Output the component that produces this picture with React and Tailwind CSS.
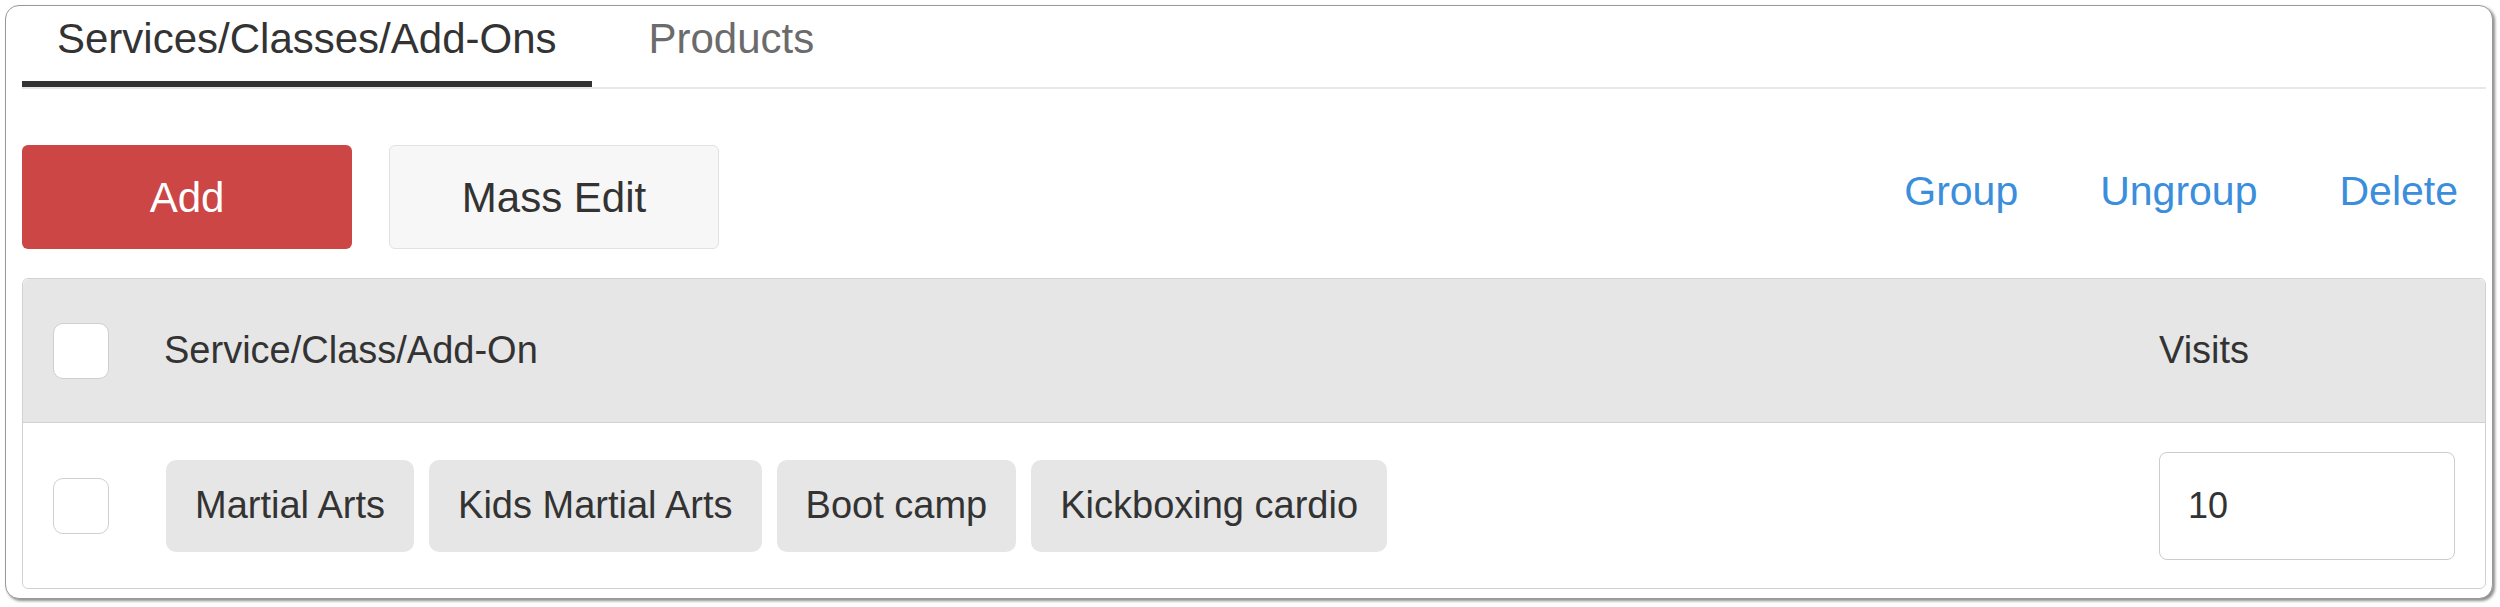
import React from "react";

const tags = ["Martial Arts", "Kids Martial Arts", "Boot camp", "Kickboxing cardio"];

const Checkbox = () => (
  <div className="w-[56px] h-[56px] shrink-0 rounded-[10px] border border-[#cfcfcf] bg-white" />
);

export default function App() {
  return (
    <div
      className="w-[2500px] h-[607px] bg-white pt-[5px] pl-[5px] pr-[7px] pb-[8px]"
      style={{ fontFamily: '"Liberation Sans", Arial, sans-serif' }}
    >
      <div className="h-full rounded-[14px] border border-[#999999] bg-white pl-[16px] pr-[6px] shadow-[2px_2px_3px_rgba(0,0,0,0.45)]">
        {/* Tabs */}
        <div className="flex gap-[28px] border-b-2 border-[#e8e8e8]">
          <div className="px-[35px] pt-[12px] pb-[21px] border-b-[6px] border-[#333333] text-[42px] leading-[42px] text-[#333333]">
            Services/Classes/Add-Ons
          </div>
          <div className="px-[29px] pt-[12px] pb-[21px] text-[42px] leading-[42px] text-[#6b6b6b]">
            Products
          </div>
        </div>

        {/* Toolbar */}
        <div className="flex items-center mt-[56px] h-[104px]">
          <button className="w-[330px] h-[104px] rounded-[6px] bg-[#cc4645] text-white text-[42px]">
            Add
          </button>
          <button className="ml-[37px] w-[330px] h-[104px] rounded-[6px] border border-[#e2e2e2] bg-[#f7f7f7] text-[#333333] text-[42px]">
            Mass Edit
          </button>
          <div className="ml-auto flex gap-[82px] pr-[28px] pb-[10px] text-[41px] text-[#3a8edb]">
            <a>Group</a>
            <a>Ungroup</a>
            <a>Delete</a>
          </div>
        </div>

        {/* Table */}
        <div className="mt-[29px] rounded-[6px] border border-[#d2d2d2] text-[#333333]">
          <div className="flex items-center h-[144px] pl-[30px] bg-[#e6e6e6] border-b border-[#d2d2d2] rounded-t-[6px]">
            <Checkbox />
            <div className="flex-1 ml-[55px] text-[38px]">Service/Class/Add-On</div>
            <div className="w-[326px] text-[38px]">Visits</div>
          </div>
          <div className="flex items-center h-[165px] pl-[30px]">
            <Checkbox />
            <div className="flex-1 flex gap-[15px] ml-[57px]">
              {tags.map((t) => (
                <span
                  key={t}
                  className="h-[92px] flex items-center px-[29px] rounded-[10px] bg-[#e6e6e6] text-[38px]"
                >
                  {t}
                </span>
              ))}
            </div>
            <div className="w-[326px]">
              <div className="w-[296px] h-[108px] flex items-center pl-[28px] rounded-[8px] border border-[#cccccc] bg-white text-[36px]">
                10
              </div>
            </div>
          </div>
        </div>
      </div>
    </div>
  );
}
